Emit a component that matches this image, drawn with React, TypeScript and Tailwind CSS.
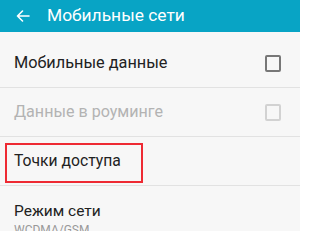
import React from "react";

export default function App() {
  return (
    <div className="w-[300px] h-[231px] overflow-hidden bg-[#f7f7f7] font-['Roboto',sans-serif]">
      <div className="h-[32px] bg-[#08a4c5] flex items-center">
        <svg className="ml-[16px] w-[14px] h-[12px]" viewBox="0 0 14 12" fill="none" stroke="white" strokeWidth="1.6" strokeLinecap="round" strokeLinejoin="round">
          <path d="M13 6H1.5M6.5 1L1.5 6l5 5" />
        </svg>
        <span className="ml-[17px] text-white text-[17.4px] leading-none">Мобильные сети</span>
      </div>
      <div className="h-[7px]" />
      <div className="h-[49px] flex items-center justify-between pl-[14px] pr-[19px] border-b border-[#e2e2e2]">
        <span className="text-[16.3px] text-[#222]">Мобильные данные</span>
        <div className="w-[16px] h-[17px] border-[2px] border-[#777] rounded-[2px]" />
      </div>
      <div className="h-[49px] flex items-center justify-between pl-[14px] pr-[19px] border-b border-[#e2e2e2]">
        <span className="text-[16.1px] text-[#b3b3b3]">Данные в роуминге</span>
        <div className="w-[16px] h-[17px] border-[2px] border-[#d2d2d2] rounded-[2px]" />
      </div>
      <div className="relative h-[49px] flex items-center pl-[14px] border-b border-[#e2e2e2]">
        <span className="text-[15.7px] text-[#222]">Точки доступа</span>
        <div className="absolute left-[5px] top-[6px] w-[138px] h-[40px] border-[2px] border-[#ee2a33]" />
      </div>
      <div className="pl-[14px] pt-[16px] flex flex-col">
        <span className="text-[15.5px] leading-[19px] text-[#222]">Режим сети</span>
        <span className="text-[12px] leading-[14px] mt-[2px] text-[#999]">WCDMA/GSM</span>
      </div>
    </div>
  );
}
